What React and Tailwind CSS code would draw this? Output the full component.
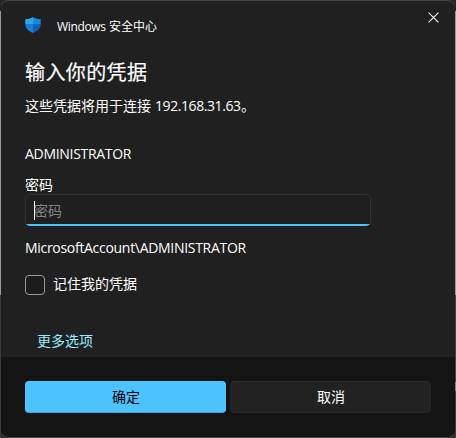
function Latin({ className = '', children }) {
  return <span className={`inline-block whitespace-pre ${className}`}>{children}</span>;
}

function ShieldIcon() {
  return (
    <svg width="16" height="16" viewBox="0 0 16 16" className="block">
      <path d="M8 0C6 1.400 3.500 2 .3 2v5.200H8z" fill="#2ba9ea" />
      <path d="M8 0c2 1.400 4.500 2 7.700 2v5.200H8z" fill="#1689dc" />
      <path d="M.3 7H8v9C3.500 14 .3 11.200.3 7z" fill="#167fd6" />
      <path d="M15.700 7H8v9c4.500-2 7.700-4.800 7.700-9z" fill="#0b62bd" />
    </svg>
  );
}

function CloseIcon() {
  return (
    <svg width="11" height="11" viewBox="0 0 11 11" className="block">
      <path d="M.6.6l9.800 9.800M10.400.6L.6 10.400" stroke="#fff" strokeWidth="1.050" fill="none" />
    </svg>
  );
}

export default function App() {
  return (
    <div className="flex h-[438px] w-[456px] bg-[#292a2a] font-['Open_Sans','Noto_Sans_CJK_SC',sans-serif] text-sm text-white">
      <div className="flex w-px flex-col">
        <div className="h-[11px] bg-[#242424]" />
        <div className="h-[284px] bg-[#999b9b]" />
        <div className="grow bg-[#3b3a3e]" />
      </div>
      <div className="flex h-[438px] w-[454px] flex-col overflow-hidden rounded-lg border-t border-b border-[#454545] bg-[#202020]">
        <main className="flex h-[356px] flex-col">
          <header className="flex h-[50px] items-center pl-6">
            <div className="mb-0.5"><ShieldIcon /></div>
            <h1 className="mt-0.5 ml-4 flex text-xs leading-4">
              <Latin className="w-[52px] tracking-[-0.35px]">Windows</Latin>
              <span>安全中心</span>
            </h1>
            <button className="mr-4 mb-[18px] ml-auto" aria-label="关闭">
              <CloseIcon />
            </button>
          </header>
          <section className="flex flex-col items-start pl-6">
            <h2 className="mt-2 text-xl leading-7 tracking-[0.4px] [-webkit-text-stroke:0.2px_white]">输入你的凭据</h2>
            <p className="mt-[9px] flex leading-5">
              这些凭据将用于连接<Latin className="ml-1 w-[86px] tracking-[-0.42px]">192.168.31.63</Latin><span>。</span>
            </p>
            <p className="mt-[28px] leading-5"><Latin className="tracking-[-0.3px]">ADMINISTRATOR</Latin></p>
            <label className="mt-[11px] leading-5">密码</label>
            <div className="-mt-px flex h-8 w-[346px] flex-col overflow-hidden rounded-[5px] bg-[#303030] px-px pt-px">
              <div className="flex grow items-center rounded-t bg-[#1f1f1f] pt-0.5 pl-2">
                <div className="h-[19px] w-px bg-white" />
                <span className="-ml-px leading-5 text-[#868686]">密码</span>
              </div>
              <div className="-mx-px h-0.5 bg-[#4cc2ff]" />
            </div>
            <p className="mt-3 leading-5"><Latin className="tracking-[-0.3px]">MicrosoftAccount\ADMINISTRATOR</Latin></p>
            <div className="mt-[17px] flex h-5 items-center gap-2">
              <div className="size-5 rounded border border-[#999] bg-[#1c1c1c]" />
              <span className="mb-0.5 leading-5">记住我的凭据</span>
            </div>
            <a className="mt-9 ml-3 leading-5 text-[#99ebff]">更多选项</a>
          </section>
        </main>
        <footer className="flex h-20 gap-1 bg-[#141414] px-6 pt-6">
          <button className="h-8 w-[201px] rounded border border-[#54c4ff] border-b-[#40a6db] bg-[#4cc2ff] pl-px text-black">确定</button>
          <button className="h-8 w-[201px] rounded border border-[#262626] border-t-[#2b2b2b] bg-[#222] pl-px">取消</button>
        </footer>
      </div>
      <div className="flex w-px flex-col">
        <div className="h-[11px] bg-[#242424]" />
        <div className="h-[284px] bg-[#999b9b]" />
        <div className="h-[87px] bg-[#454545]" />
        <div className="h-[9px] bg-[#858585]" />
        <div className="grow bg-[#3b3b3b]" />
      </div>
    </div>
  );
}
